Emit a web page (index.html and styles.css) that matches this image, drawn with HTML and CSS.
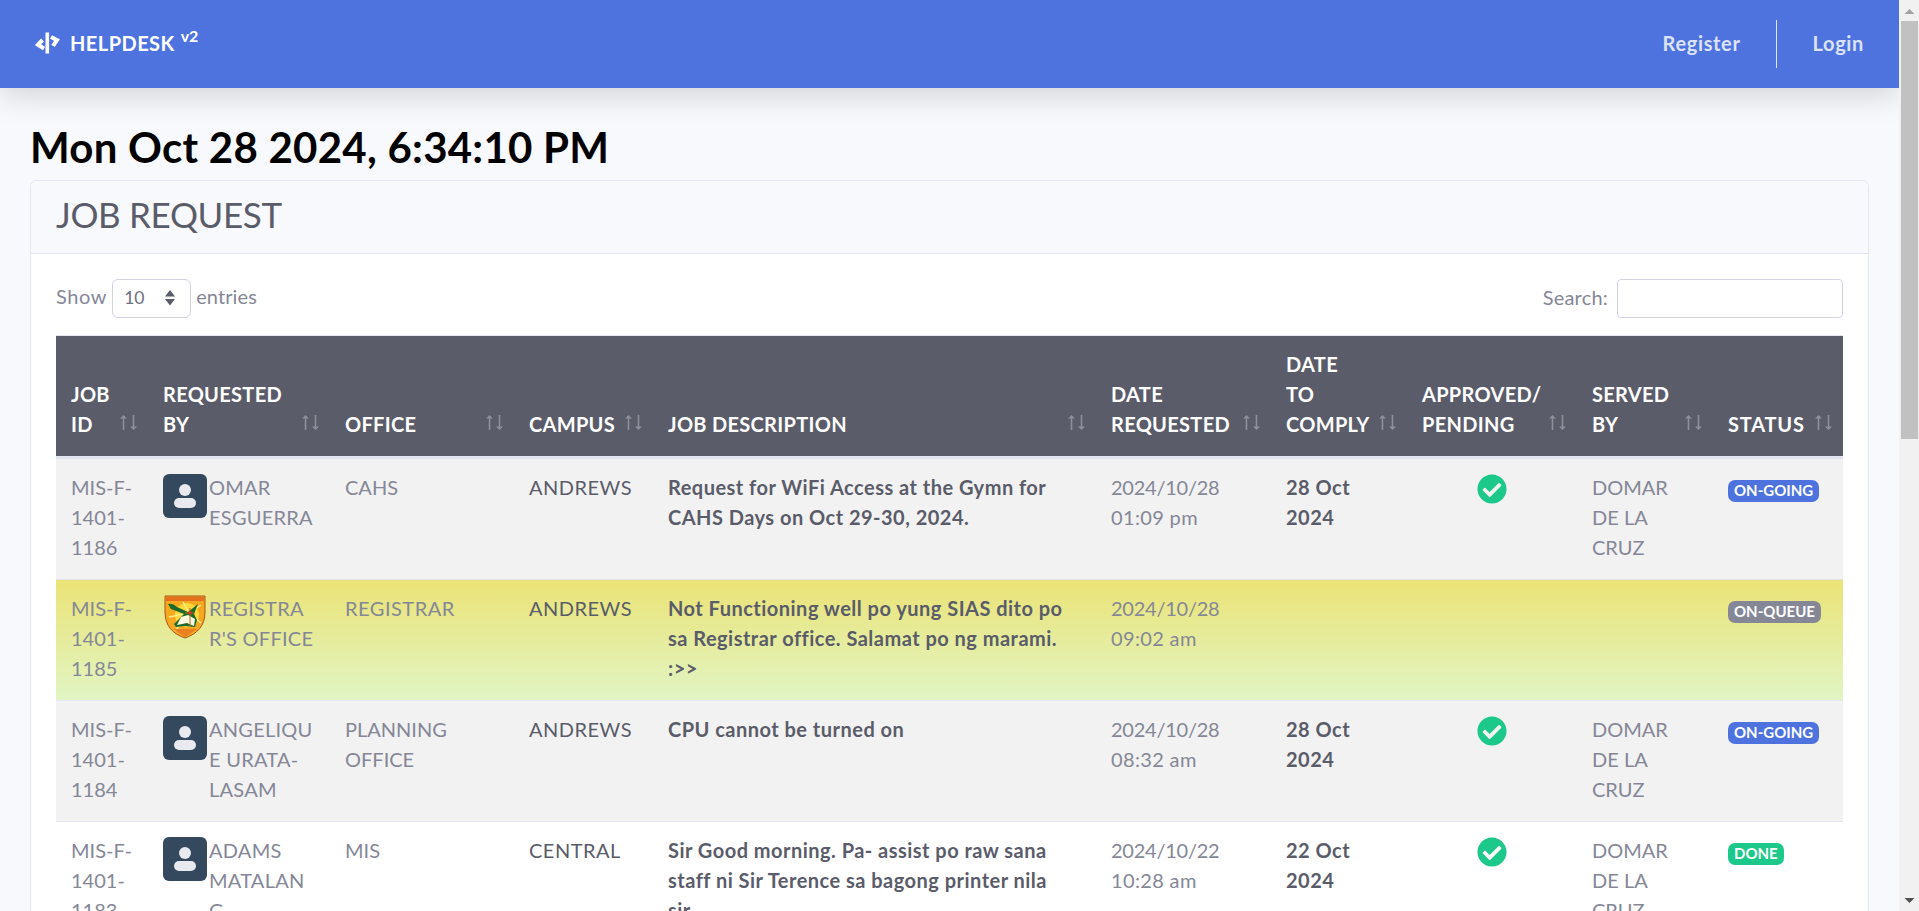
FILE: index.html
```html
<!DOCTYPE html>
<html lang="en">
<head>
<meta charset="utf-8">
<title>Helpdesk v2</title>
<link rel="stylesheet" href="styles.css">
</head>
<body>
<svg class="defs" width="0" height="0">
  <symbol id="sort" viewBox="0 0 19 16"><path d="M4.500 15V1M14.500 0V14" fill="none" stroke="#8e8f99" stroke-width="1.600"/><path d="M1 3.500L4.500 0L8 3.500ZM11 11.500L14.500 15L18 11.500Z" fill="#8e8f99"/></symbol>
  <symbol id="user" viewBox="0 0 44 44"><rect width="44" height="44" rx="6" fill="#34495e"/><circle cx="22" cy="16" r="6" fill="#e8eaef"/><rect x="11" y="24" width="22" height="10" rx="5" fill="#e8eaef"/></symbol>
  <symbol id="check" viewBox="0 0 512 512"><path fill="#1cc88a" d="M504 256c0 136.967-111.033 248-248 248S8 392.967 8 256 119.033 8 256 8s248 111.033 248 248zM227.314 387.314l184-184c6.248-6.248 6.248-16.379 0-22.627l-22.627-22.627c-6.248-6.249-16.379-6.249-22.628 0L216 308.118l-70.059-70.059c-6.248-6.248-16.379-6.248-22.628 0l-22.627 22.627c-6.248 6.248-6.248 16.379 0 22.627l104 104c6.249 6.249 16.379 6.249 22.628.001z"/></symbol>
</svg>
<div class="app">
  <div class="page">
    <nav class="topbar">
      <a class="brand"><svg width="26" height="24" viewBox="0 0 26 24" fill="none" stroke="#fff" stroke-width="4"><path d="M12.300 1.500V22.500" stroke-width="3.600"/><path d="M7.500 9L3 13.700L9 17.500"/><path d="M16 6L22 9L18 14.800"/></svg><span class="name">HELPDESK</span><span class="ver">v2</span></a>
      <div class="links"><a>Register</a><i class="divider"></i><a>Login</a></div>
    </nav>
    <main class="content">
      <h1 class="clock">Mon Oct 28 2024, 6:34:10 PM</h1>
      <section class="card">
        <h2 class="card-header">JOB REQUEST</h2>
        <div class="card-body">
          <div class="tools">
            <div class="length"><span class="word">Show</span><span class="select">10<svg width="10" height="16" viewBox="0 0 10 16" fill="#5a5c69"><path d="M0 6.500L5 0L10 6.500ZM0 9L5 15.500L10 9Z"/></svg></span><span class="word last">entries</span></div>
            <label class="search"><span>Search:</span><input type="text"></label>
          </div>
          <table>
            <colgroup><col class="c1"><col class="c2"><col class="c3"><col class="c4"><col class="c5"><col class="c6"><col class="c7"><col class="c8"><col class="c9"><col class="c10"></colgroup>
            <thead><tr>
              <th><div>JOB<br>ID<svg><use href="#sort"/></svg></div></th>
              <th><div>REQUESTED<br>BY<svg><use href="#sort"/></svg></div></th>
              <th><div>OFFICE<svg><use href="#sort"/></svg></div></th>
              <th><div>CAMPUS<svg><use href="#sort"/></svg></div></th>
              <th><div>JOB DESCRIPTION<svg><use href="#sort"/></svg></div></th>
              <th><div>DATE<br>REQUESTED<svg><use href="#sort"/></svg></div></th>
              <th><div>DATE<br>TO<br>COMPLY<svg><use href="#sort"/></svg></div></th>
              <th><div>APPROVED/<br>PENDING<svg><use href="#sort"/></svg></div></th>
              <th><div>SERVED<br>BY<svg><use href="#sort"/></svg></div></th>
              <th class="wide"><div>STATUS<svg><use href="#sort"/></svg></div></th>
            </tr></thead>
            <tbody>
              <tr class="odd">
                <td>MIS-F-<br>1401-<br>1186</td>
                <td><div class="person"><svg><use href="#user"/></svg><span>OMAR<br>ESGUERRA</span></div></td>
                <td>CAHS</td><td class="campus">ANDREWS</td>
                <td class="strong">Request for WiFi Access at the Gymn for<br>CAHS Days on Oct 29-30, 2024.</td>
                <td><span class="day">2024/10/28</span><br><span class="time">01:09 pm</span></td><td class="strong">28 Oct<br>2024</td>
                <td class="ok"><svg><use href="#check"/></svg></td>
                <td>DOMAR<br>DE LA<br>CRUZ</td><td><span class="badge going">ON-GOING</span></td>
              </tr>
              <tr class="queue">
                <td>MIS-F-<br>1401-<br>1185</td>
                <td><div class="person"><svg viewBox="0 0 44 44"><path d="M2 1H42V17C42 31 34 39 22 43C10 39 2 31 2 17Z" fill="#f6a821" stroke="#a8541c"/><path d="M3 2H41V6H3Z" fill="#e5701d"/><circle cx="24" cy="20" r="12" fill="#ffd83e"/><path d="M26 18L6 22M26 18L12 36M26 18L38 10M26 18L38 28M26 18L20 7" stroke="#ffee8a" stroke-width="1.500"/><path d="M5 9Q10 8 14 12L25 17L35 9L31 19L34 25L32 32L22 31L13 32L11 29L17 23L21 19L8 14Z" fill="#1d6b2a"/><path d="M18 22L25 20L32 24L31 31L24 28L14 30Z" fill="#fffbe0"/><path d="M27 13V31M22 18H32" stroke="#c0641a"/><circle cx="27" cy="18" r="1.800" fill="#d93a1c"/><path d="M10 34H34L22 42Z" fill="#e98022"/></svg><span>REGISTRA<br>R'S OFFICE</span></div></td>
                <td class="spaced">REGISTRAR</td><td class="campus">ANDREWS</td>
                <td class="strong">Not Functioning well po yung SIAS dito po<br>sa Registrar office. Salamat po ng marami.<br>:&gt;&gt;</td>
                <td><span class="day">2024/10/28</span><br><span class="time">09:02 am</span></td><td></td><td></td><td></td>
                <td><span class="badge queued">ON-QUEUE</span></td>
              </tr>
              <tr class="odd">
                <td>MIS-F-<br>1401-<br>1184</td>
                <td><div class="person"><svg><use href="#user"/></svg><span>ANGELIQU<br>E URATA-<br>LASAM</span></div></td>
                <td>PLANNING<br>OFFICE</td><td class="campus">ANDREWS</td>
                <td class="strong">CPU cannot be turned on</td>
                <td><span class="day">2024/10/28</span><br><span class="time">08:32 am</span></td><td class="strong">28 Oct<br>2024</td>
                <td class="ok"><svg><use href="#check"/></svg></td>
                <td>DOMAR<br>DE LA<br>CRUZ</td><td><span class="badge going">ON-GOING</span></td>
              </tr>
              <tr>
                <td>MIS-F-<br>1401-<br>1183</td>
                <td><div class="person"><svg><use href="#user"/></svg><span>ADAMS<br>MATALAN<br>G</span></div></td>
                <td>MIS</td><td class="campus">CENTRAL</td>
                <td class="strong">Sir Good morning. Pa- assist po raw sana<br>staff ni Sir Terence sa bagong printer nila<br>sir</td>
                <td><span class="day">2024/10/22</span><br><span class="time">10:28 am</span></td><td class="strong">22 Oct<br>2024</td>
                <td class="ok"><svg><use href="#check"/></svg></td>
                <td>DOMAR<br>DE LA<br>CRUZ</td><td><span class="badge done">DONE</span></td>
              </tr>
            </tbody>
          </table>
        </div>
      </section>
    </main>
  </div>
  <aside class="scrollbar"><svg width="20" height="21" viewBox="0 0 20 21"><path d="M5.500 14L10.500 9L15.500 14Z" fill="#a3a3a3"/></svg><div class="thumb"></div><svg class="down" width="20" height="21" viewBox="0 0 20 21"><path d="M5.500 8L10.500 13L15.500 8Z" fill="#505050"/></svg></aside>
</div>
</body>
</html>
```
FILE: styles.css
```css
* { box-sizing: border-box; }
body { margin: 0; font: 400 20px/30px Lato, "Open Sans", sans-serif; color: #858796; background: #f8f9fc; overflow: hidden; font-variant-ligatures: none; }
.defs { position: absolute; }
.app { display: flex; height: 911px; overflow: hidden; }
.page { flex: 1; overflow: hidden; }
.topbar { height: 88px; background: #4e73df; box-shadow: 0 10px 20px rgba(0,0,0,.15); box-shadow: 0 8px 30px rgba(0,0,0,.15); display: flex; justify-content: space-between; padding: 0 35px; font-weight: 700; }
.brand { display: flex; align-items: center; color: #fff; padding-bottom: 2px; }
.name { margin-left: 9px; letter-spacing: .45px; }
.ver { font-size: 16px; margin: -14px 0 0 6px; }
.links { display: flex; align-items: center; color: #dce3f9; letter-spacing: .65px; }
.links a { padding-bottom: 2px; }
.divider { width: 1px; height: 48px; background: #e3e6f0; margin: 0 36px 0 35px; }
.content { padding: 0 30px; }
.clock { margin: 0; padding-top: 34px; height: 92px; font-size: 42px; line-height: 50px; font-weight: 700; color: #000; white-space: nowrap; letter-spacing: .25px; }
.card { border: 1px solid #e3e6f0; border-radius: 7px; background: #fff; height: 800px; overflow: hidden; }
.card-header { margin: 0; height: 73px; padding: 12px 25px; background: #f8f9fc; border-bottom: 1px solid #e3e6f0; font-size: 35px; line-height: 42px; font-weight: 400; letter-spacing: -.35px; color: #5a5c69; }
.card-body { padding: 24px 25px; }
.tools { display: flex; justify-content: space-between; height: 57px; }
.length, .search { display: flex; align-items: center; height: 40px; }
.word { padding-bottom: 4px; letter-spacing: .6px; }
.last { letter-spacing: .1px; }
.select { display: flex; align-items: center; justify-content: space-between; width: 79px; height: 39px; padding: 0 15px 0 11px; margin: 0 5px; border: 1px solid #d1d3e2; border-radius: 6px; color: #6e707e; font-size: 17.500px; }
.search span { padding-bottom: 3px; letter-spacing: .2px; }
.search input { width: 226px; height: 39px; margin-left: 9px; border: 1px solid #d1d3e2; border-radius: 4px; }
table { width: 1787px; table-layout: fixed; border-collapse: separate; border-spacing: 0; white-space: nowrap; }
.c1 { width: 92px; } .c2 { width: 182px; } .c3 { width: 184px; } .c4 { width: 139px; } .c5 { width: 443px; }
.c6 { width: 175px; } .c7 { width: 136px; } .c8 { width: 170px; } .c9 { width: 136px; } .c10 { width: 130px; }
th { background: #5a5c69; color: #fff; font-weight: 700; text-align: left; vertical-align: bottom; padding: 13px 15px 17px; border-top: 1px solid #e3e6f0; border-bottom: 3px solid #e3e6f0; letter-spacing: .3px; }
.wide { letter-spacing: .8px; }
th div { position: relative; }
th svg { position: absolute; right: -5px; bottom: 8px; width: 19px; height: 16px; }
td { vertical-align: top; padding: 13px 15px 15px; height: 121px; border-top: 1px solid #e3e6f0; }
tbody tr:first-child td { border-top: 0; height: 120px; }
.odd { background: #f2f2f2; }
.queue { background: linear-gradient(#ebe375, #e1f5c4); }
.person { display: flex; gap: 2px; letter-spacing: .25px; }
.person svg { width: 44px; height: 44px; flex: none; margin-top: 2px; }
.campus, .strong { color: #5a5c69; }
.campus, .spaced { letter-spacing: .5px; }
.strong { font-weight: 700; letter-spacing: .48px; }
.day { letter-spacing: -.25px; }
.time { letter-spacing: .35px; }
.ok { text-align: center; line-height: 0; }
.ok svg { width: 30px; height: 30px; margin-top: 2px; }
.badge { display: inline-block; height: 22px; padding: 0 6px; margin-top: 8px; vertical-align: top; border-radius: 7px; color: #fff; font-size: 15px; line-height: 20px; font-weight: 700; }
.going { background: #4e73df; } .queued { background: #858796; } .done { background: #1cc88a; }
.scrollbar { width: 20px; background: #f1f1f1; display: flex; flex-direction: column; }
.thumb { width: 17px; height: 418px; margin-left: 2px; background: #c1c1c1; }
.down { margin-top: auto; }
```
